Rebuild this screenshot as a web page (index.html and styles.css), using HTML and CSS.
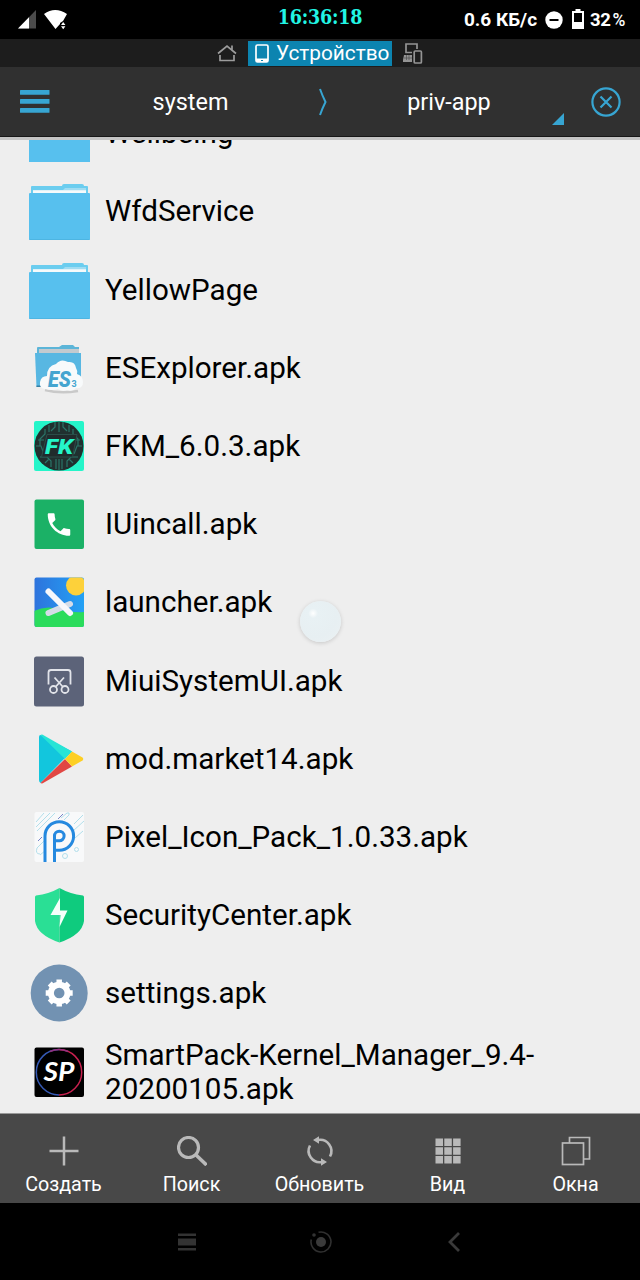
FILE: index.html
```html
<!DOCTYPE html>
<html lang="ru">
<head>
    <meta charset="UTF-8">
    <meta name="viewport" content="width=device-width, initial-scale=1.0">
    <title>priv-app</title>
    <link rel="stylesheet" href="styles.css">
</head>
<body>
    <!-- status bar -->
    <div class="status">
        <div class="status-left">
            <svg width="18" height="19" viewBox="0 0 18 19"><path d="M18 0V18.500H0z" fill="#4b4b4b"/><path d="M11 7.200V18.500H0z" fill="#fff"/></svg>
            <svg width="24" height="20" viewBox="0 0 24 20"><path d="M0 4Q11-4 23 4L19 11 16 13V14L11.500 19z" fill="#fff"/><path d="M17 15l2.200-3 2.200 3zM17 16.200h4.400l-2.200 3z" fill="#fff"/></svg>
        </div>
        <div class="clock">16:36:18</div>
        <div class="status-right">
            <span class="speed">0.6 КБ/с</span>
            <svg class="dnd" width="18" height="18" viewBox="0 0 18 18"><circle cx="9" cy="9" r="8.700" fill="#fff"/><path d="M4.500 9h9" stroke="#000" stroke-width="2"/></svg>
            <svg class="battery" width="12" height="20" viewBox="0 0 12 20"><path d="M3.500 0h5v2H12v18H0V2h3.500z" fill="#fff"/><path d="M2 4h8v9H2z" fill="#000"/></svg>
            <span class="percent">32<span class="sign">%</span></span>
        </div>
    </div>

    <!-- storage tabs -->
    <div class="tabs">
        <svg class="home" width="20" height="18" viewBox="0 0 20 18" fill="none" stroke="#9c9c9c" stroke-width="1.700"><path d="M1 9.500L10 2l9 7.500M15 5.500V1.500M3 11v5.500h14V11"/></svg>
        <div class="tab-active">
            <svg width="14" height="19" viewBox="0 0 14 19"><rect x="1" y="1" width="12" height="17" rx="1.500" fill="none" stroke="#fff" stroke-width="1.700"/><path d="M1 14.500h12V18H1z" fill="#fff"/><path d="M6 16.500h2" stroke="#0c84b0"/></svg>
            <span>Устройство</span>
        </div>
        <svg class="devices" width="20" height="21" viewBox="0 0 20 21" fill="none" stroke="#949494" stroke-width="1.700"><path d="M9 9.500H3V1h11v5"/><rect x="11.200" y="8" width="7.200" height="12" rx="1"/><path d="M0 19v-2l1-5h8v7z" fill="#949494" stroke="none"/><path d="M1 15h8M3.500 12v5M6 12v5" stroke="#444" stroke-width=".6"/></svg>
    </div>

    <!-- path bar -->
    <div class="pathbar">
        <svg class="burger" width="30" height="23" viewBox="0 0 30 23" fill="#37a5d2"><rect width="29.500" height="4.700" rx=".5"/><rect y="9" width="29.500" height="4.700" rx=".5"/><rect y="18" width="29.500" height="4.700" rx=".5"/></svg>
        <div class="crumb">system</div>
        <svg class="arrow" width="10" height="28" viewBox="0 0 10 28"><path d="M1 1Q3.500 8 6.500 14 3.500 20 1 27" fill="none" stroke="#37a5d2" stroke-width="2"/></svg>
        <div class="crumb last">priv-app</div>
        <svg class="corner" width="12" height="12" viewBox="0 0 12 12"><path d="M12 0v12H0z" fill="#37a5d2"/></svg>
        <svg class="close" width="30" height="30" viewBox="0 0 30 30" fill="none" stroke="#37a5d2" stroke-width="2.200"><circle cx="15" cy="15" r="13.600"/><path d="M9.500 9.500l11 11M20.500 9.500l-11 11"/></svg>
    </div>

    <!-- file list, scrolled to the end -->
    <div class="list">
        <div class="row">
            <svg class="icon" viewBox="0 0 62 62"><path d="M2 17V7h31l2-3h19l2 3h3v10z" fill="#6bcdef"/><path d="M5 9h53v6H5z" fill="#eef7fa"/><path d="M1 13h61v47H1z" fill="#57c0ee"/></svg>
            <div class="name">Wellbeing</div>
        </div>
        <div class="row">
            <svg class="icon" viewBox="0 0 62 62"><path d="M3 16V7q0-1 1-1h30q0-2 2-2h18q2 0 2 2h3q1 0 1 1v9z" fill="#6bcdef"/><path d="M5 10h30l2-2h21v6H5z" fill="#9fdcf2"/><path d="M5 10.300h53V13H5z" fill="#f5fafb"/><rect x="1" y="13" width="61" height="47" rx="1" fill="#57c0ee"/><path d="M1.500 59.500h60" stroke="#4db5e2"/></svg>
            <div class="name">WfdService</div>
        </div>
        <div class="row">
            <svg class="icon" viewBox="0 0 62 62"><path d="M3 16V7q0-1 1-1h30q0-2 2-2h18q2 0 2 2h3q1 0 1 1v9z" fill="#6bcdef"/><path d="M5 10h30l2-2h21v6H5z" fill="#9fdcf2"/><path d="M5 10.300h53V13H5z" fill="#f5fafb"/><rect x="1" y="13" width="61" height="47" rx="1" fill="#57c0ee"/><path d="M1.500 59.500h60" stroke="#4db5e2"/></svg>
            <div class="name">YellowPage</div>
        </div>
        <div class="row">
            <svg class="icon" viewBox="0 0 62 62">
                <path d="M9 18V11q0-1 1-1h21l3-2h11l2 2h4v8z" fill="#5cb5d8"/><path d="M11 12h40v5H11z" fill="#c3cacf"/>
                <path d="M7 16h46v34H8.500z" fill="#58b7e2"/><path d="M8.500 48.500H15V50H8.500z" fill="#367fa2"/>
                <path d="M17 53q15 4 33 1" stroke="#c9c9c9" stroke-width="2.500" fill="none"/>
                <path d="M17 52q-6-1-5-7 1-6 7-6 0-10 9-12 5-6 12-2 7-1 8 6 2 3 1 6 6 2 6 8 0 7-7 6-3 4-9 2-5 2-9-1-6 2-13 0z" fill="#f8fafb"/>
                <text class="glyph-es" x="20" y="50" textLength="23" lengthAdjust="spacingAndGlyphs">ES</text><text class="glyph-three" x="43.500" y="50">3</text>
            </svg>
            <div class="name">ESExplorer.apk</div>
        </div>
        <div class="row">
            <svg class="icon" viewBox="0 0 62 62">
                <rect x="6" y="6" width="50" height="50" rx="2" fill="#25f5c9"/><circle cx="31" cy="31" r="24.500" fill="#20302f"/>
                <g fill="none" stroke="#2a7468" stroke-width="1.200"><path d="M31 7v10M27 7v5l-4 4M35 7v5l4 4M21 10v7M41 10v7M17 14v5l-5 5v7M45 14v5l5 5v7M8 31h5l3 8M54 31h-5l-3 8M12 42h7l4 4v6M50 42h-7l-4 4v6M28 44v10M31 44v11M34 44v10M10 25h6M52 25h-6M17 48l4-4M45 48l-4-4"/></g>
                <path d="M19 19.500h30L44.500 42h-31z" fill="#202b2c" stroke="#2b4d48"/>
                <text class="glyph-fk" x="17" y="38.500" textLength="28" lengthAdjust="spacingAndGlyphs">FK</text>
            </svg>
            <div class="name">FKM_6.0.3.apk</div>
        </div>
        <div class="row">
            <svg class="icon" viewBox="0 0 62 62"><rect x="6.500" y="6.500" width="49.500" height="49.500" rx="2" fill="#1bb166"/><path transform="translate(16 16.500) scale(1.250)" d="M6.600 10.800c1.400 2.800 3.800 5.100 6.600 6.600l2.200-2.200c.3-.3.700-.4 1-.2 1.100.4 2.300.6 3.600.6.600 0 1 .4 1 1V20c0 .6-.4 1-1 1C10.600 21 3 13.400 3 4c0-.6.400-1 1-1h3.500c.6 0 1 .4 1 1 0 1.200.2 2.400.6 3.600.1.300 0 .7-.2 1z" fill="#fff"/></svg>
            <div class="name">IUincall.apk</div>
        </div>
        <div class="row">
            <svg class="icon" viewBox="0 0 62 62">
                <defs>
                    <linearGradient id="sky" x1="0" y1="0" x2="1" y2="0"><stop offset="0" stop-color="#2e73dc"/><stop offset="1" stop-color="#23a1f5"/></linearGradient>
                    <clipPath id="tile"><rect x="6.500" y="6.500" width="49.500" height="49.500" rx="2"/></clipPath>
                </defs>
                <g clip-path="url(#tile)">
                    <path d="M6 6h50v50H6z" fill="url(#sky)"/><circle cx="48" cy="14.500" r="10" fill="#fdd13a"/>
                    <path d="M6 40Q18 34 30 38t26 3v16H6z" fill="#2bdc5c"/>
                    <path d="M20.500 42L42 33" stroke="#d5dce8" stroke-width="6" stroke-linecap="round"/>
                    <path d="M20.500 20.500L42 42" stroke="#f7f7fb" stroke-width="6" stroke-linecap="round"/>
                </g>
            </svg>
            <div class="name">launcher.apk</div>
        </div>
        <div class="row">
            <svg class="icon" viewBox="0 0 62 62"><rect x="6" y="6.500" width="50" height="50" rx="2.500" fill="#5c6379"/><g fill="none" stroke="#e2e4ea" stroke-width="1.800"><path d="M20.500 34.500V22.500q0-2.500 2.500-2.500h17q2.500 0 2.500 2.500v12M26.500 27.500L35 37M36 27.500L27.500 37"/><circle cx="25.500" cy="39.500" r="3.500"/><circle cx="37" cy="39.500" r="3.500"/></g></svg>
            <div class="name">MiuiSystemUI.apk</div>
        </div>
        <div class="row">
            <svg class="icon" viewBox="0 0 62 62">
                <path d="M12.500 7L44 23.500 36 31 12.500 55q-1.500-1-1.500-3V9q0-2 1.500-2z" fill="#12c6dd"/><path d="M12.500 7Q14 6 16 7.500L44 23.500 37 31z" fill="#27e4d6"/>
                <path d="M37 31l7 7.500L16 54.500q-2 1.500-3.500.5z" fill="#e14744"/><path d="M44 23.500l10.500 6q1.500 1.500 0 3L44 38.500 37 31z" fill="#fdcf24"/>
            </svg>
            <div class="name">mod.market14.apk</div>
        </div>
        <div class="row">
            <svg class="icon" viewBox="0 0 62 62">
                <rect x="6.500" y="6" width="49.500" height="50" rx="2" fill="#f8f9fa"/>
                <g fill="none" stroke="#a9dbe9" stroke-width=".9"><path d="M8 21L22 7M9 25L27 7M8 16l8-9M46 18l9-9M45 25l11-10M47 32l8-7M33 12l6-5q3-1 2 2l-5 5M9 42l7-7M12 49l6-5M9 42q-2 6 3 6"/><circle cx="37" cy="50" r="2.500"/><circle cx="48.500" cy="43.500" r="2"/></g>
                <path d="M10 35l4-4M30 13l5-5" stroke="#7784c8"/>
                <path d="M17 56V30a14.300 14.300 0 1 1 14.300 14.300H28M26.500 56V30a4.800 4.800 0 1 1 4.800 4.800H27" fill="none" stroke="#2589df" stroke-width="3"/>
            </svg>
            <div class="name">Pixel_Icon_Pack_1.0.33.apk</div>
        </div>
        <div class="row">
            <svg class="icon" viewBox="0 0 62 62"><path d="M31.500 4Q21 10 8 11.500 7 12 7 13v24q2 14 24.500 21.500z" fill="#2adf95"/><path d="M31.500 4Q42 10 55 11.500q1 .5 1 1.500v24q-2 14-24.500 21.500z" fill="#0fcb7e"/><path d="M32 14L22.500 31H30l2.500 0L31.500 43 39.500 26.500H32z" fill="#f5fffa"/></svg>
            <div class="name">SecurityCenter.apk</div>
        </div>
        <div class="row">
            <svg class="icon" viewBox="0 0 62 62"><circle cx="31.200" cy="31" r="28.500" fill="#7292b2"/><g fill="none" stroke="#fff"><circle cx="31.200" cy="31" r="8.300" stroke-width="6"/><path d="M31.200 17.500v27M17.700 31h27M21.700 21.500l19 19M40.700 21.500l-19 19" stroke-width="5.500"/></g><circle cx="31.200" cy="31" r="5.300" fill="#7292b2"/></svg>
            <div class="name">settings.apk</div>
        </div>
        <div class="row">
            <svg class="icon" viewBox="0 0 62 62"><rect x="6.500" y="6.500" width="49.500" height="49.500" rx="2" fill="#000"/><path d="M31 8.500a22.700 22.700 0 0 1 0 45.400" fill="none" stroke="#c8214f" stroke-width="1.500"/><path d="M31 8.500a22.700 22.700 0 0 0 0 45.400" fill="none" stroke="#3559b4" stroke-width="1.500"/><path d="M22 10.500q9-4 18 0" fill="none" stroke="#93307e" stroke-width="1.500"/><text class="glyph-sp" x="15.500" y="40" textLength="31" lengthAdjust="spacingAndGlyphs">SP</text></svg>
            <div class="name">SmartPack-Kernel_Manager_9.4-20200105.apk</div>
        </div>
        <div class="bubble"></div>
    </div>

    <!-- actions -->
    <div class="toolbar">
        <div class="action">
            <svg viewBox="0 0 30 30"><path d="M15 .5v29M.5 15h29" stroke="#b9b9b9" stroke-width="2.500"/></svg>
            <span>Создать</span>
        </div>
        <div class="action">
            <svg viewBox="0 0 30 30" fill="none" stroke="#b9b9b9"><circle cx="11.500" cy="11.500" r="10" stroke-width="3.200"/><path d="M18.500 18.500l11 10.500" stroke-width="3.500"/></svg>
            <span>Поиск</span>
        </div>
        <div class="action">
            <svg viewBox="0 0 30 30" fill="none" stroke="#b9b9b9" stroke-width="2.600"><path d="M13 4A11.300 11.300 0 0 1 25 20.500M5 9.500A11.300 11.300 0 0 0 17 26"/><path d="M8 4l6-3.800v7.600zM22 26l-6-3.800v7.600z" fill="#b9b9b9" stroke="none"/></svg>
            <span>Обновить</span>
        </div>
        <div class="action">
            <svg viewBox="0 0 30 30" fill="#b9b9b9"><path d="M2.500 2.500h7.500v7.500H2.500zM11.300 2.500h7.500v7.500h-7.500zM20.100 2.500h7.500v7.500h-7.500zM2.500 11.300h7.500v7.500H2.500zM11.300 11.300h7.500v7.500h-7.500zM20.100 11.300h7.500v7.500h-7.500zM2.500 20.100h7.500v7.500H2.500zM11.300 20.100h7.500v7.500h-7.500zM20.100 20.100h7.500v7.500h-7.500z"/></svg>
            <span>Вид</span>
        </div>
        <div class="action">
            <svg viewBox="0 0 30 30" fill="none" stroke="#b9b9b9" stroke-width="1.700"><rect x="1.500" y="7" width="21" height="21.500"/><path d="M8.500 7V1.500h20V23h-6"/></svg>
            <span>Окна</span>
        </div>
    </div>

    <!-- system buttons -->
    <div class="sysnav">
        <svg width="18" height="18" viewBox="0 0 18 18" fill="#333"><path d="M0 .5h18V3H0zM0 5.500h18v7H0zM0 15h18v2.500H0z"/></svg>
        <svg width="22" height="22" viewBox="0 0 22 22"><path d="M8.500 1.300A10 10 0 1 1 1.300 8.500" fill="none" stroke="#303030" stroke-width="1.600"/><circle cx="4" cy="4" r="1.800" fill="#333"/><circle cx="11" cy="11" r="5" fill="#3a3a3a"/></svg>
        <svg width="14" height="20" viewBox="0 0 14 20"><path d="M13 1L4 10l9 9" fill="none" stroke="#3a3a3a" stroke-width="2.800"/></svg>
    </div>
</body>
</html>
```
FILE: styles.css
```css
body {
    margin: 0;
    width: 640px;
    height: 1280px;
    display: flex;
    flex-direction: column;
    overflow: hidden;
    background: #000;
    color: #fff;
    font-family: Roboto, "Noto Sans", sans-serif;
}
svg {
    display: block;
    flex: none;
}
.status {
    height: 39px;
    display: grid;
    grid-template-columns: 1fr auto 1fr;
    background: #000;
}
.status-left {
    display: flex;
    gap: 8px;
    padding: 10px 0 0 18px;
}
.clock {
    padding-top: 3px;
    font-family: "DejaVu Serif Condensed", "DejaVu Serif", serif;
    font-size: 19.5px;
    font-weight: bold;
    line-height: 30px;
    font-stretch: condensed;
    letter-spacing: -0.2px;
    color: #21f5e4;
}
.status-right {
    display: flex;
    justify-content: flex-end;
    align-items: center;
    padding-right: 15px;
    font-size: 19px;
    font-weight: 700;
}
.dnd {
    margin: 0 9px 0 8px;
}
.battery {
    margin: 0 6px 2px 0;
}
.percent {
    font-size: 18.5px;
    letter-spacing: -0.4px;
}
.sign {
    font-size: 17.5px;
    font-weight: 500;
    margin-left: 2px;
}
.tabs {
    height: 28px;
    display: flex;
    align-items: center;
    padding-left: 217px;
    background: #1d1d1d;
}
.tab-active {
    display: flex;
    align-items: center;
    gap: 7px;
    box-sizing: border-box;
    width: 144px;
    height: 25px;
    margin: 0 11px;
    padding-left: 7px;
    background: #0c84b0;
    font-size: 20.8px;
    line-height: 25px;
}
.pathbar {
    height: 70px;
    box-sizing: border-box;
    display: flex;
    align-items: center;
    padding: 0 19px 0 20px;
    background: #303030;
    border-bottom: 1px solid #171717;
}
.crumb {
    width: 257px;
    text-align: center;
    font-size: 23.4px;
}
.burger {
    margin-right: 12px;
}
.crumb.last {
    flex: 1;
    padding-left: 17px;
}
.corner {
    align-self: flex-end;
    margin: 0 27px 11px 0;
}
.list {
    flex: 1;
    position: relative;
    min-height: 0;
    display: flex;
    flex-direction: column;
    justify-content: flex-end;
    overflow: hidden;
    box-sizing: border-box;
    padding-bottom: 2.4px;
    background: #eee;
    border-top: 3px solid #c4c4c4;
    border-bottom: 1px solid #999;
}
.row {
    flex: none;
    height: 78.2px;
    display: flex;
    align-items: center;
    gap: 15px;
    padding-left: 28px;
    color: #000;
}
.icon {
    width: 62px;
    height: 62px;
}
.name {
    width: 450px;
    font-size: 29.6px;
    line-height: 34px;
}
.glyph-es {
    font: italic 900 22px Roboto, sans-serif;
    fill: #45a5d0;
}
.glyph-three {
    font: bold 9px Roboto, sans-serif;
    fill: #45a5d0;
}
.glyph-fk {
    font: italic 900 21px Roboto, sans-serif;
    fill: #25f5c9;
}
.glyph-sp {
    font: italic bold 26px Lato, sans-serif;
    fill: #fff;
}
/* floating touch button above the list */
.bubble {
    position: absolute;
    left: 300px;
    top: 461px;
    width: 41px;
    height: 41px;
    border-radius: 50%;
    background: radial-gradient(circle at 32% 30%, #fff 0, #e8f1f4 12%, #e7eff2 60%, #ebf1f3 100%);
    box-shadow: 0 1px 4px rgba(0,0,0,0.17);
}
.toolbar {
    height: 89px;
    display: grid;
    grid-template-columns: repeat(5, 1fr);
    background: #484848;
}
.action {
    display: flex;
    flex-direction: column;
    align-items: center;
    padding: 22px 1px 0 0;
    font-size: 19.7px;
    line-height: 24px;
}
.action svg {
    width: 30px;
    height: 30px;
    margin-bottom: 7px;
}
.sysnav {
    height: 77px;
    display: flex;
    align-items: center;
    justify-content: center;
    gap: 114px;
    padding-right: 2px;
    background: #000;
}
```
